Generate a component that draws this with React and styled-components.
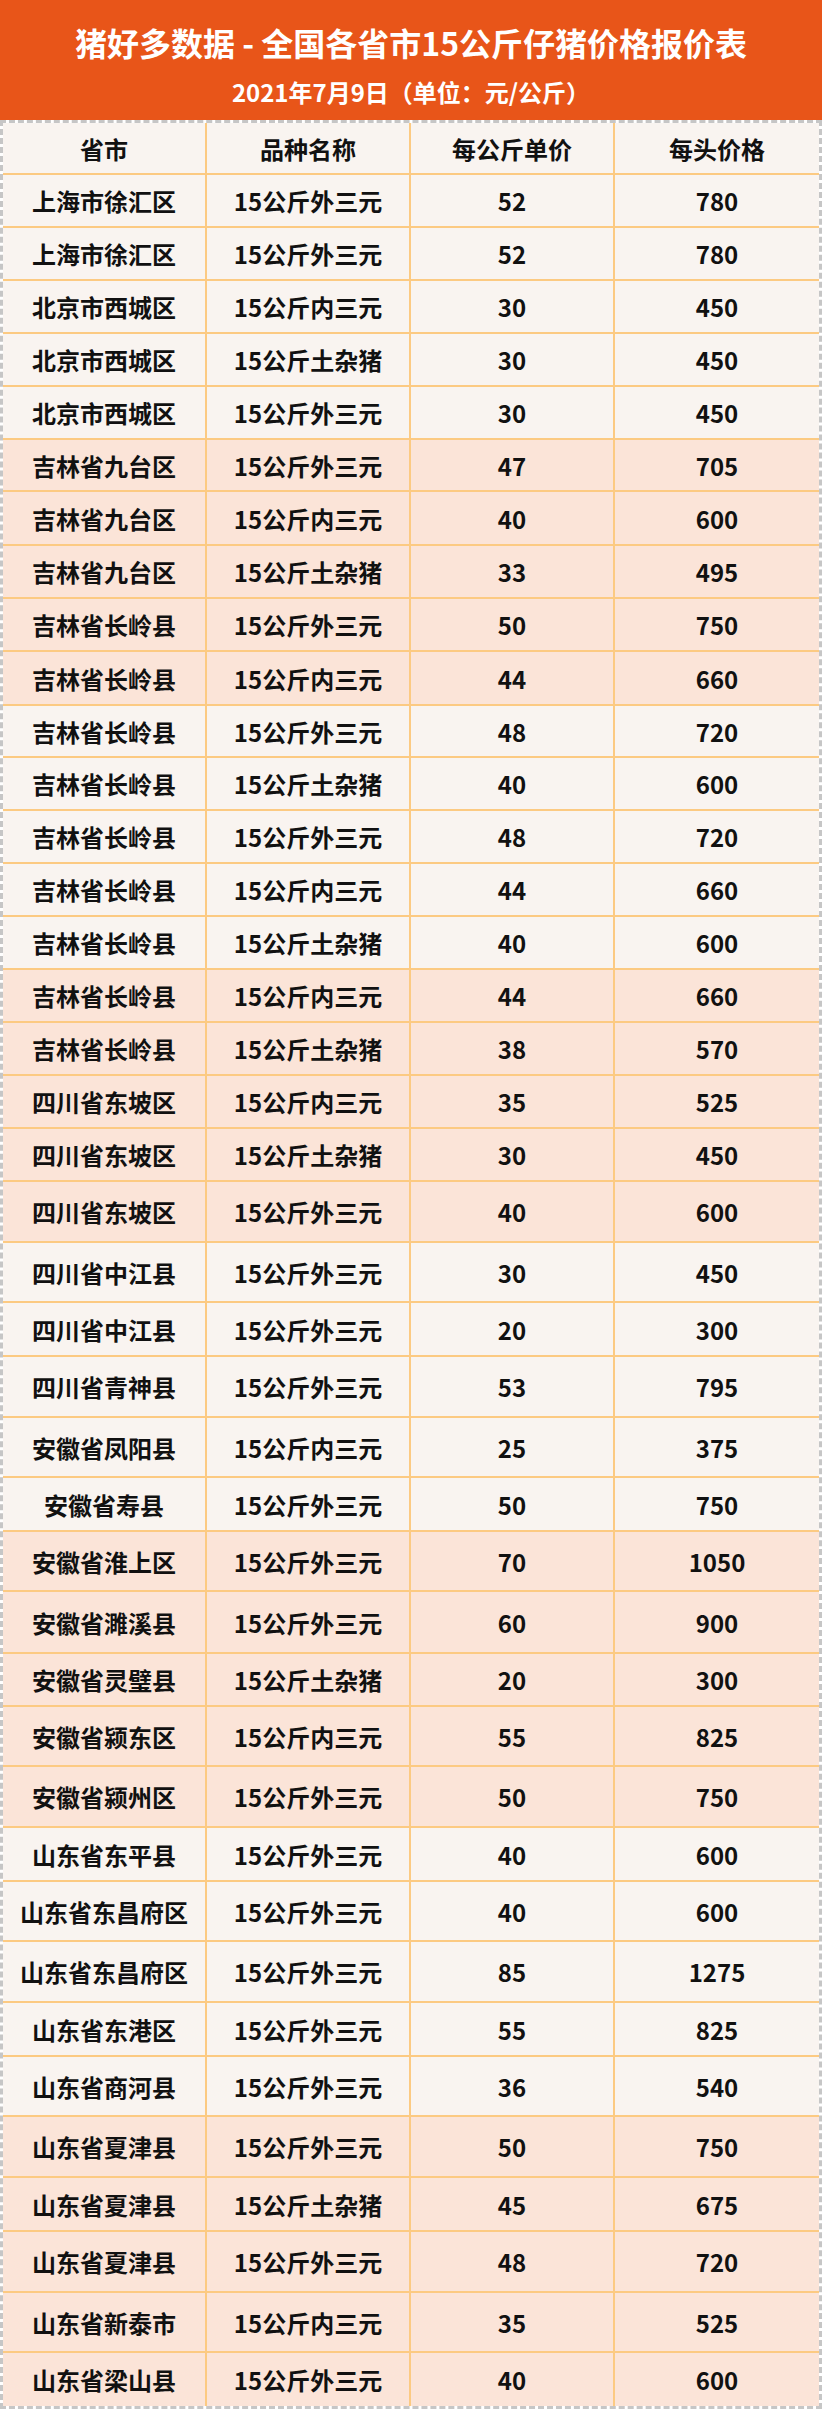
import React from "react";
import styled, { createGlobalStyle } from "styled-components";

const GlobalStyle = createGlobalStyle`
  html, body {
    margin: 0;
    padding: 0;
    background: #ffffff;
  }
  body {
    font-family: "Noto Sans CJK SC", "Noto Sans", sans-serif;
  }
`;

// [省市, 品种名称, 每公斤单价, 每头价格, 行高]
const rows = [
  ["上海市徐汇区", "15公斤外三元", 52, 780, 53],
  ["上海市徐汇区", "15公斤外三元", 52, 780, 53],
  ["北京市西城区", "15公斤内三元", 30, 450, 53],
  ["北京市西城区", "15公斤土杂猪", 30, 450, 53],
  ["北京市西城区", "15公斤外三元", 30, 450, 53],
  ["吉林省九台区", "15公斤外三元", 47, 705, 52],
  ["吉林省九台区", "15公斤内三元", 40, 600, 54],
  ["吉林省九台区", "15公斤土杂猪", 33, 495, 53],
  ["吉林省长岭县", "15公斤外三元", 50, 750, 53],
  ["吉林省长岭县", "15公斤内三元", 44, 660, 54],
  ["吉林省长岭县", "15公斤外三元", 48, 720, 52],
  ["吉林省长岭县", "15公斤土杂猪", 40, 600, 53],
  ["吉林省长岭县", "15公斤外三元", 48, 720, 53],
  ["吉林省长岭县", "15公斤内三元", 44, 660, 53],
  ["吉林省长岭县", "15公斤土杂猪", 40, 600, 53],
  ["吉林省长岭县", "15公斤内三元", 44, 660, 53],
  ["吉林省长岭县", "15公斤土杂猪", 38, 570, 53],
  ["四川省东坡区", "15公斤内三元", 35, 525, 53],
  ["四川省东坡区", "15公斤土杂猪", 30, 450, 53],
  ["四川省东坡区", "15公斤外三元", 40, 600, 61],
  ["四川省中江县", "15公斤外三元", 30, 450, 60],
  ["四川省中江县", "15公斤外三元", 20, 300, 54],
  ["四川省青神县", "15公斤外三元", 53, 795, 61],
  ["安徽省凤阳县", "15公斤内三元", 25, 375, 60],
  ["安徽省寿县", "15公斤外三元", 50, 750, 54],
  ["安徽省淮上区", "15公斤外三元", 70, 1050, 60],
  ["安徽省濉溪县", "15公斤外三元", 60, 900, 62],
  ["安徽省灵璧县", "15公斤土杂猪", 20, 300, 53],
  ["安徽省颍东区", "15公斤内三元", 55, 825, 60],
  ["安徽省颍州区", "15公斤外三元", 50, 750, 61],
  ["山东省东平县", "15公斤外三元", 40, 600, 54],
  ["山东省东昌府区", "15公斤外三元", 40, 600, 60],
  ["山东省东昌府区", "15公斤外三元", 85, 1275, 61],
  ["山东省东港区", "15公斤外三元", 55, 825, 54],
  ["山东省商河县", "15公斤外三元", 36, 540, 60],
  ["山东省夏津县", "15公斤外三元", 50, 750, 61],
  ["山东省夏津县", "15公斤土杂猪", 45, 675, 54],
  ["山东省夏津县", "15公斤外三元", 48, 720, 61],
  ["山东省新泰市", "15公斤内三元", 35, 525, 60],
  ["山东省梁山县", "15公斤外三元", 40, 600, 53],
];

const columns = ["省市", "品种名称", "每公斤单价", "每头价格"];

export default function App() {
  return (
    <>
      <GlobalStyle />
      <Page>
        <Banner>
          <Title>猪好多数据 - 全国各省市15公斤仔猪价格报价表</Title>
          <Subtitle>2021年7月9日（单位：元/公斤）</Subtitle>
        </Banner>
        <Table>
          <Row $h={52} $peach={false}>
            {columns.map((c) => (
              <Cell key={c}>{c}</Cell>
            ))}
          </Row>
          {rows.map(([city, kind, unit, head, h], i) => (
            <Row
              key={i}
              $h={h}
              $peach={Math.floor(i / 5) % 2 === 1}
              $last={i === rows.length - 1}
            >
              <Cell>{city}</Cell>
              <Cell>{kind}</Cell>
              <Cell>{unit}</Cell>
              <Cell>{head}</Cell>
            </Row>
          ))}
        </Table>
      </Page>
    </>
  );
}

const Page = styled.div`
  width: 822px;
`;

const Banner = styled.div`
  height: 120px;
  box-sizing: border-box;
  background: #e85519;
  display: flex;
  flex-direction: column;
  align-items: center;
  padding-top: 22px;
  gap: 15px;
  color: #ffffff;
  font-weight: 700;
`;

const Title = styled.div`
  font-size: 32px;
  line-height: 40px;
  white-space: nowrap;
`;

const Subtitle = styled.div`
  font-size: 24px;
  line-height: 30px;
  white-space: nowrap;
`;

const Table = styled.div`
  border: 3px dashed #c6c6c6;
  display: flex;
  flex-direction: column;
`;

const Row = styled.div`
  display: grid;
  grid-template-columns: repeat(4, 1fr);
  height: ${(p) => p.$h}px;
  box-sizing: border-box;
  background: ${(p) => (p.$peach ? "#fbe4d8" : "#f9f4f0")};
  border-bottom: ${(p) => (p.$last ? "none" : "2px solid #fcca82")};
`;

const Cell = styled.div`
  display: flex;
  align-items: center;
  justify-content: center;
  font-size: 24px;
  font-weight: 700;
  color: #111111;
  white-space: nowrap;
  border-right: 2px solid #fcca82;

  &:last-child {
    border-right: none;
  }
`;
